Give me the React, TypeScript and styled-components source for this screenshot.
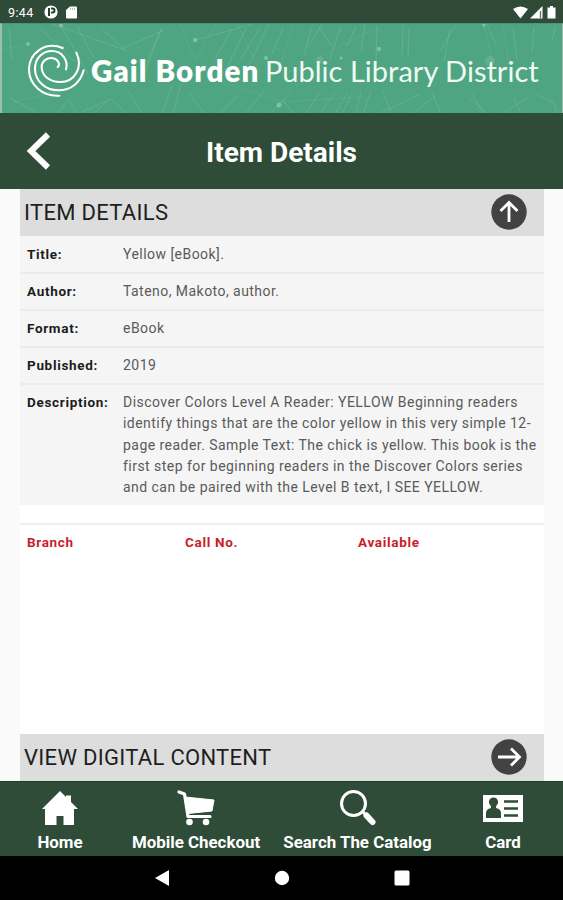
import React from "react";
import styled, { createGlobalStyle } from "styled-components";

const GlobalStyle = createGlobalStyle`
  * { box-sizing: border-box; }
  body { margin: 0; background: #fafafa; font-family: Roboto, sans-serif; }
`;

const Screen = styled.div`
  width: 563px;
  height: 900px;
  display: flex;
  flex-direction: column;
  overflow: hidden;
  background: #fafafa;
`;

const StatusBar = styled.div`
  flex: 0 0 23px;
  display: flex;
  justify-content: space-between;
  padding: 0 5px 0 8px;
  background: #2f4b37;
  color: #fff;
`;

const StatusGroup = styled.div<{ $gap: number }>`
  display: flex;
  align-items: center;
  gap: ${(p) => p.$gap}px;
  padding-top: 1px;
`;

const Clock = styled.span`
  width: 28px;
  font-size: 12.5px;
  line-height: 15px;
  letter-spacing: 0.35px;
  white-space: nowrap;
`;

const Banner = styled.div`
  position: relative;
  flex: 0 0 90px;
  display: flex;
  align-items: center;
  padding: 4px 0 0 26px;
  background: #4fa582;
  border-left: 2px solid #9dbdae;
  border-right: 1px solid #9dbdae;
  border-top: 1px solid #479674;
`;

const BannerPattern = styled.svg`
  position: absolute;
  inset: 0;
`;

const Wordmark = styled.div`
  position: relative;
  display: flex;
  align-items: baseline;
  margin-left: 6px;
  color: #fff;
  white-space: nowrap;
  line-height: 36px;
`;

const BrandStrong = styled.span`
  width: 174px;
  font: 800 29.5px/36px Lato, sans-serif;
  letter-spacing: 1.1px;
`;

const BrandLight = styled.span`
  font: 400 29px/36px Lato, sans-serif;
  letter-spacing: 0.02px;
  color: #effaf4;
`;

const TitleBar = styled.header`
  flex: 0 0 76px;
  display: grid;
  grid-template-columns: 80px 1fr 80px;
  align-items: center;
  background: #2e4c38;
  border-top: 1px solid #245238;
  color: #fff;
`;

const BackButton = styled.button`
  border: 0;
  background: none;
  padding: 0 0 2px 26px;
  display: flex;
`;

const PageTitle = styled.h1`
  margin: 2px 0 0;
  text-align: center;
  font-size: 28px;
  line-height: 34px;
  font-weight: 700;
  white-space: nowrap;
`;

const Content = styled.main`
  flex: 1;
  min-height: 0;
  margin: 0 19px 0 20px;
  display: flex;
  flex-direction: column;
  background: #fff;
`;

const SectionHeader = styled.div`
  flex: 0 0 47px;
  display: flex;
  align-items: center;
  justify-content: space-between;
  padding: 0 17px 2px 4px;
  background: #dddddd;
`;

const SectionTitle = styled.h2`
  margin: 3px 0 0;
  font-size: 22px;
  line-height: 28px;
  font-weight: 400;
  letter-spacing: 0.3px;
  color: #1e1e1e;
  white-space: nowrap;
`;

const Fields = styled.dl`
  margin: 0;
  flex: 0 0 269px;
  display: flex;
  flex-direction: column;
  padding-top: 1px;
  background: #f5f5f5;
`;

const Field = styled.div`
  display: grid;
  grid-template-columns: 96px 1fr;
  padding: 7px 0 7px 7px;
  border-bottom: 2px solid #ececec;
  &:last-child { border-bottom: 0; }
`;

const FieldName = styled.dt`
  font-size: 13.5px;
  line-height: 21.1px;
  font-weight: 700;
  letter-spacing: 0.68px;
  color: #1c1c1c;
`;

const FieldValue = styled.dd`
  margin: 0;
  font-size: 14px;
  line-height: 21.1px;
  letter-spacing: 0.46px;
  color: #5a5a5a;
  white-space: pre;
`;

const Holdings = styled.section`
  flex: 1;
  margin-top: 18px;
  border-top: 2px solid #eeeeee;
`;

const HoldingsHead = styled.div`
  display: grid;
  grid-template-columns: 158px 173px 1fr;
  padding: 7px 0 0 7px;
  font-size: 13.5px;
  line-height: 21px;
  font-weight: 700;
  letter-spacing: 0.68px;
  color: #c9202a;
`;

const TabBar = styled.nav`
  flex: 0 0 75px;
  display: grid;
  grid-template-columns: 120px 152px 171px 120px;
  background: #2e4c38;
  border-top: 1px solid #1d3c27;
`;

const Tab = styled.a`
  display: flex;
  flex-direction: column;
  align-items: center;
  padding-top: 7px;
  color: #fff;
  font-size: 16.9px;
  line-height: 20px;
  font-weight: 700;
  white-space: nowrap;
  svg { margin-bottom: 5px; }
`;

const SystemBar = styled.div`
  flex: 0 0 44px;
  display: flex;
  justify-content: center;
  align-items: center;
  gap: 104px;
  background: #000;
`;

const rays = [
  "M7 4L10 35M39 5L73 38M58 0L86 50M50 0L120 25L162 6M75 2L92 34M98 3L125 28M160 3L143 47M159 6L146 34M194 16L250 0M230 5L213 35M244 4L225 44M258 4L238 36M267 0L247 41M281 4L270 30M310 2L302 31M317 3L330 23M320 0L306 24M339 2L328 35M354 3L344 23M363 0L359 27M375 2L374 39M401 0L400 32M407 4L406 34M453 2L437 29M448 4L442 37M485 0L494 20M511 4L515 34M532 3L530 29M553 2L550 18",
  "M8 74L38 90M55 89L67 76L75 89M80 88L109 75L125 90M106 77L91 90M126 67L141 90M160 90L170 62M171 90L179 60M203 90L186 68M218 90L236 72M243 90L262 67M268 90L288 69M280 75L292 90M304 90L317 69M318 90L333 68M333 90L346 68M340 90L349 71M354 90L359 67M361 90L369 66M376 90L419 70M390 90L380 66M410 90L433 72M439 90L430 68M467 74L486 90M482 90L470 70M500 90L526 73M519 90L512 75M535 71L552 79L554 90",
  "M0 25L31 20M12 78L60 66M96 15L83 0M178 0L193 37L214 0M215 57L280 78L360 73M283 50L376 4M482 1L491 39M501 0L508 50M546 70L558 88M235 0L260 52M291 1L278 41",
];

const dots: Array<[number, number, number]> = [
  [59, 1, 2], [193, 16, 2.2], [277, 81, 2.5], [377, 25, 2.2], [482, 1, 1.8], [318, 36, 3.5], [264, 34, 2], [26, 20, 2], [339, 34, 1.6], [488, 37, 5],
];

const Pattern = () => (
  <BannerPattern width="560" height="89" viewBox="0 0 560 89" fill="none">
    <g stroke="#a7dfbd" strokeWidth="0.8">
      {rays.map((d, i) => (
        <path key={i} d={d} opacity={i === 2 ? 0.15 : 0.27} />
      ))}
    </g>
    {dots.map(([x, y, r]) => (
      <circle key={x} cx={x} cy={y} r={r} fill="#a9e0bc" opacity={r > 3 ? 0.2 : 0.5} />
    ))}
  </BannerPattern>
);

const SpiralMark = styled.svg`
  position: relative;
  flex: none;
`;

const ArrowBadge = ({ direction }: { direction: "up" | "right" }) => (
  <svg width="36" height="36" viewBox="0 0 36 36" fill="none">
    <circle cx="18" cy="18" r="17.7" fill="#424242" />
    <path
      d={direction === "up" ? "M18 28V9M9.5 17L18 8.5L26.5 17" : "M7 18H28M20 9.5L28.5 18L20 26.5"}
      stroke="#fff"
      strokeWidth="2.8"
    />
  </svg>
);

const fields: Array<[string, string]> = [
  ["Title:", "Yellow [eBook]."],
  ["Author:", "Tateno, Makoto, author."],
  ["Format:", "eBook"],
  ["Published:", "2019"],
  [
    "Description:",
    "Discover Colors Level A Reader: YELLOW Beginning readers\nidentify things that are the color yellow in this very simple 12-\npage reader. Sample Text: The chick is yellow. This book is the\nfirst step for beginning readers in the Discover Colors series\nand can be paired with the Level B text, I SEE YELLOW.",
  ],
];

export default function App() {
  return (
    <Screen>
      <GlobalStyle />
      <StatusBar>
        <StatusGroup $gap={8}>
          <Clock>9:44</Clock>
          <svg width="14" height="14" viewBox="0 0 14 14">
            <circle cx="7" cy="7" r="6.6" fill="#fff" />
            <path d="M5 3V11M7 3.5H8.5a1.8 1.8 0 0 1 0 4H7" fill="none" stroke="#26402f" strokeWidth="2" />
          </svg>
          <svg width="11" height="13" viewBox="0 0 11 13">
            <path d="M4 .5H10Q11 .5 11 1.5V11.5Q11 12.5 10 12.5H1Q0 12.5 0 11.5V4Z" fill="#fff" />
            <path d="M4.5 2V4M6.5 2V4M8.5 2V4" stroke="#9aa69e" strokeWidth=".7" />
          </svg>
        </StatusGroup>
        <StatusGroup $gap={2}>
          <svg width="15" height="13" viewBox="0 0 15 13">
            <path d="M0 3Q7.5-2 15 3L7.5 12.5Z" fill="#fff" />
          </svg>
          <svg width="13" height="13" viewBox="0 0 13 13">
            <path d="M0 12.5L12.5 0V12.5Z" fill="#fff" />
            <path d="M10.5 5V12" stroke="#5d7464" strokeWidth="1.3" />
          </svg>
          <svg width="13" height="13" viewBox="0 0 13 13">
            <path d="M3 1.5H5V0H8V1.5H10.5V12.5H2.5V1.5Z" fill="#fff" />
          </svg>
        </StatusGroup>
      </StatusBar>

      <Banner>
        <Pattern />
        <SpiralMark width="57" height="54" viewBox="83 129 171 162" fill="none" stroke="#fff" strokeWidth="6.2" strokeLinecap="round">
          <path d="M187 141C133 119 86 158 86 205C86 250 125 287 177 284" />
          <path d="M250 208C240 245 212 268 175 268C130 268 104 235 104 203C104 170 128 150 155 150C185 150 205 178 197 205" />
          <path d="M228 155C250 200 222 243 180 243C145 243 124 222 124 198C124 180 140 170 155 171C172 173 182 190 172 198" />
        </SpiralMark>
        <Wordmark>
          <BrandStrong>Gail Borden</BrandStrong>
          <BrandLight>Public Library District</BrandLight>
        </Wordmark>
      </Banner>

      <TitleBar>
        <BackButton aria-label="Back">
          <svg width="25" height="38" viewBox="0 0 25 38" fill="none">
            <path d="M22 2.5L5 19L22 35.5" stroke="#fff" strokeWidth="6" />
          </svg>
        </BackButton>
        <PageTitle>Item Details</PageTitle>
      </TitleBar>

      <Content>
        <SectionHeader>
          <SectionTitle>ITEM DETAILS</SectionTitle>
          <ArrowBadge direction="up" />
        </SectionHeader>
        <Fields>
          {fields.map(([name, value]) => (
            <Field key={name}>
              <FieldName>{name}</FieldName>
              <FieldValue>{value}</FieldValue>
            </Field>
          ))}
        </Fields>
        <Holdings>
          <HoldingsHead>
            <span>Branch</span>
            <span>Call No.</span>
            <span>Available</span>
          </HoldingsHead>
        </Holdings>
        <SectionHeader>
          <SectionTitle>VIEW DIGITAL CONTENT</SectionTitle>
          <ArrowBadge direction="right" />
        </SectionHeader>
      </Content>

      <TabBar>
        <Tab>
          <svg width="36" height="38" viewBox="0 0 36 38">
            <path d="M18 2L24 8V6.5H29V13L36 20H32V36H21.5V27H14.5V36H3V20H0Z" fill="#fff" />
          </svg>
          Home
        </Tab>
        <Tab>
          <svg width="38" height="38" viewBox="0 0 38 38">
            <path d="M2 3L7.5 5L11 27.5H33" fill="none" stroke="#fff" strokeWidth="3.2" strokeLinecap="round" strokeLinejoin="round" />
            <path d="M8 8L37 11L35 22L11 24.5Z" fill="#fff" stroke="#fff" strokeLinejoin="round" />
            <circle cx="12.5" cy="33" r="3.3" fill="#fff" />
            <circle cx="29" cy="33" r="3.3" fill="#fff" />
          </svg>
          Mobile Checkout
        </Tab>
        <Tab>
          <svg width="38" height="38" viewBox="0 0 38 38" fill="none" stroke="#fff">
            <circle cx="14.5" cy="14.5" r="12" strokeWidth="3" />
            <path d="M23 22L27 26" strokeWidth="3" />
            <path d="M27.5 26.5L33.5 33" strokeWidth="6" strokeLinecap="round" />
          </svg>
          Search The Catalog
        </Tab>
        <Tab>
          <svg width="40" height="38" viewBox="0 0 40 38">
            <rect y="6" width="40" height="27" fill="#fff" />
            <circle cx="10.5" cy="13" r="4.6" fill="#2e4c38" />
            <path d="M8 15H13V19Q18 20 18 24V29H3V24Q3 20 8 19Z" fill="#2e4c38" />
            <path d="M21 12.5H35M21 19.5H35M21 26.5H35" stroke="#2e4c38" strokeWidth="2.4" />
          </svg>
          Card
        </Tab>
      </TabBar>

      <SystemBar>
        <svg width="16" height="16" viewBox="0 0 16 16"><path d="M1 8L15 0V16Z" fill="#fff" /></svg>
        <svg width="16" height="16" viewBox="0 0 16 16"><circle cx="8" cy="8" r="7.2" fill="#fff" /></svg>
        <svg width="16" height="16" viewBox="0 0 16 16"><rect x=".5" y=".5" width="15" height="15" rx="1.5" fill="#fff" /></svg>
      </SystemBar>
    </Screen>
  );
}
